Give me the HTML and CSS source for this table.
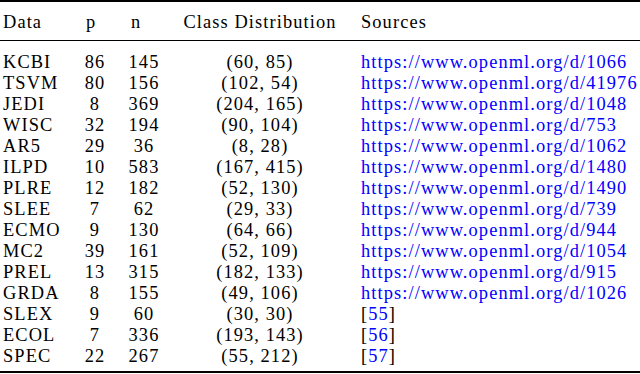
FILE: index.html
```html
<!DOCTYPE html>
<html>
<head>
<meta charset="utf-8">
<link rel="stylesheet" href="styles.css">
</head>
<body>
<table class="tbl">
  <colgroup>
    <col class="w-data"><col class="w-p"><col class="w-n"><col class="w-cls"><col class="w-src">
  </colgroup>
  <thead>
    <tr>
      <th class="c-data">Data</th>
      <th class="c-p">p</th>
      <th class="c-n">n</th>
      <th class="c-cls">Class Distribution</th>
      <th class="c-src">Sources</th>
    </tr>
  </thead>
  <tbody>
    <tr><td class="c-data">KCBI</td><td class="c-num">86</td><td class="c-num">145</td><td class="c-cls">(60, 85)</td><td class="c-src"><a class="lnk">https://www.openml.org/d/1066</a></td></tr>
    <tr><td class="c-data">TSVM</td><td class="c-num">80</td><td class="c-num">156</td><td class="c-cls">(102, 54)</td><td class="c-src"><a class="lnk">https://www.openml.org/d/41976</a></td></tr>
    <tr><td class="c-data">JEDI</td><td class="c-num">8</td><td class="c-num">369</td><td class="c-cls">(204, 165)</td><td class="c-src"><a class="lnk">https://www.openml.org/d/1048</a></td></tr>
    <tr><td class="c-data">WISC</td><td class="c-num">32</td><td class="c-num">194</td><td class="c-cls">(90, 104)</td><td class="c-src"><a class="lnk">https://www.openml.org/d/753</a></td></tr>
    <tr><td class="c-data">AR5</td><td class="c-num">29</td><td class="c-num">36</td><td class="c-cls">(8, 28)</td><td class="c-src"><a class="lnk">https://www.openml.org/d/1062</a></td></tr>
    <tr><td class="c-data">ILPD</td><td class="c-num">10</td><td class="c-num">583</td><td class="c-cls">(167, 415)</td><td class="c-src"><a class="lnk">https://www.openml.org/d/1480</a></td></tr>
    <tr><td class="c-data">PLRE</td><td class="c-num">12</td><td class="c-num">182</td><td class="c-cls">(52, 130)</td><td class="c-src"><a class="lnk">https://www.openml.org/d/1490</a></td></tr>
    <tr><td class="c-data">SLEE</td><td class="c-num">7</td><td class="c-num">62</td><td class="c-cls">(29, 33)</td><td class="c-src"><a class="lnk">https://www.openml.org/d/739</a></td></tr>
    <tr><td class="c-data">ECMO</td><td class="c-num">9</td><td class="c-num">130</td><td class="c-cls">(64, 66)</td><td class="c-src"><a class="lnk">https://www.openml.org/d/944</a></td></tr>
    <tr><td class="c-data">MC2</td><td class="c-num">39</td><td class="c-num">161</td><td class="c-cls">(52, 109)</td><td class="c-src"><a class="lnk">https://www.openml.org/d/1054</a></td></tr>
    <tr><td class="c-data">PREL</td><td class="c-num">13</td><td class="c-num">315</td><td class="c-cls">(182, 133)</td><td class="c-src"><a class="lnk">https://www.openml.org/d/915</a></td></tr>
    <tr><td class="c-data">GRDA</td><td class="c-num">8</td><td class="c-num">155</td><td class="c-cls">(49, 106)</td><td class="c-src"><a class="lnk">https://www.openml.org/d/1026</a></td></tr>
    <tr><td class="c-data">SLEX</td><td class="c-num">9</td><td class="c-num">60</td><td class="c-cls">(30, 30)</td><td class="c-src">[<a class="lnk">55</a>]</td></tr>
    <tr><td class="c-data">ECOL</td><td class="c-num">7</td><td class="c-num">336</td><td class="c-cls">(193, 143)</td><td class="c-src">[<a class="lnk">56</a>]</td></tr>
    <tr><td class="c-data">SPEC</td><td class="c-num">22</td><td class="c-num">267</td><td class="c-cls">(55, 212)</td><td class="c-src">[<a class="lnk">57</a>]</td></tr>
  </tbody>
</table>
</body>
</html>
```
FILE: styles.css
```css
html, body {
  margin: 0;
  padding: 0;
  background: #ffffff;
}

.tbl {
  width: 640px;
  table-layout: fixed;
  border-collapse: collapse;
  border-spacing: 0;
  border-top: 2px solid #000;
  border-bottom: 2px solid #000;
  font-family: "Liberation Serif", "DejaVu Serif", serif;
  font-size: 18.4px;
  letter-spacing: 1.1px;
  line-height: 21px;
  color: #000;
}

.w-data { width: 77px; }
.w-p { width: 36px; }
.w-n { width: 62px; }
.w-cls { width: 170px; }
.w-src { width: 295px; }

.tbl th,
.tbl td {
  padding: 0;
  font-weight: normal;
  white-space: nowrap;
  vertical-align: baseline;
}

.tbl thead th {
  padding-top: 10.4px;
  padding-bottom: 6.6px;
  border-bottom: 1px solid #000;
}

.tbl tbody tr:first-child td {
  padding-top: 11.2px;
}

.tbl tbody tr:last-child td {
  padding-bottom: 3.8px;
}

.c-data {
  text-align: left;
  padding-left: 3px !important;
}

.c-p {
  text-align: left;
  padding-left: 9px !important;
}

.c-n {
  text-align: left;
  padding-left: 18px !important;
}

.c-num {
  text-align: center;
}

.c-cls {
  text-align: center;
}

.c-src {
  text-align: left;
  padding-left: 16px !important;
}

.lnk {
  color: #0000ff;
  text-decoration: none;
}
```
